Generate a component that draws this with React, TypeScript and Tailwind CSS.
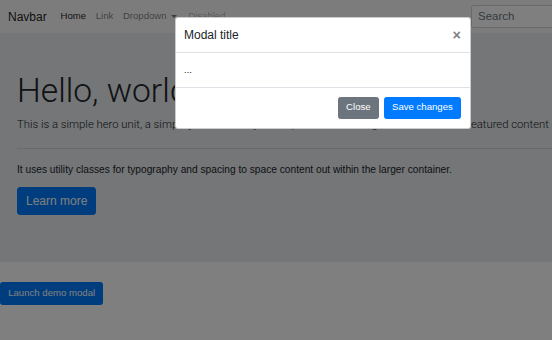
export default function App() {
  const links = [
    { label: "Home", cls: "text-black/90" },
    { label: "Link", cls: "text-black/50" },
    { label: "Dropdown", cls: "text-black/50", caret: true },
    { label: "Disabled", cls: "text-black/30" },
  ];

  return (
    <div className="relative h-[340px] w-[552px] overflow-hidden bg-white font-['Liberation_Sans',Arial,sans-serif] text-[9.6px] leading-[14.4px] text-[#212529]">
      {/* navbar */}
      <nav className="flex h-[33px] items-center bg-[#f8f9fa] pl-[8px]">
        <span className="mr-[9px] text-[12px] leading-[18px] text-black/90">Navbar</span>
        {links.map((l) => (
          <span key={l.label} className={`flex items-center px-[4.8px] ${l.cls}`}>
            {l.label}
            {l.caret && (
              <span className="ml-[4px] mr-[2px] inline-block border-x-[3px] border-t-[3px] border-x-transparent border-t-current" />
            )}
          </span>
        ))}
        <div className="ml-auto mr-[-14px] flex h-[23px] w-[95px] shrink-0 items-center rounded-[2.4px] border border-[#ced4da] bg-white px-[6px] text-[11.5px] text-[#6c757d]">
          Search
        </div>
      </nav>

      {/* jumbotron */}
      <div className="whitespace-nowrap bg-[#e9ecef] pb-[47px] pl-[17px] pt-[38px]">
        <h1 className="mb-[5px] font-['Roboto',Arial,sans-serif] text-[33.6px] font-light leading-[40px]">
          Hello, world!
        </h1>
        <p className="font-['Roboto',Arial,sans-serif] text-[11.3px] font-light leading-[18px]">
          This is a simple hero unit, a simple jumbotron-style component for calling extra attention to featured content or information.
        </p>
        <hr className="-mr-[40px] my-[14px] border-t border-black/10" />
        <p className="mb-[9.6px] text-[10.2px]">
          It uses utility classes for typography and spacing to space content out within the larger container.
        </p>
        <a className="inline-flex h-[28px] items-center rounded-[3px] border border-[#007bff] bg-[#007bff] px-[8px] text-[12px] text-white">
          Learn more
        </a>
      </div>

      <div className="mt-[20px]">
        <button className="flex h-[23px] items-center rounded-[2.4px] border border-[#007bff] bg-[#007bff] px-[7.2px] text-white">
          Launch demo modal
        </button>
      </div>

      {/* backdrop */}
      <div className="absolute inset-0 bg-black/50" />

      {/* modal */}
      <div className="absolute left-[175px] top-[17px] w-[296px] rounded-[3px] border border-black/20 bg-white">
        <div className="flex h-[35px] items-center justify-between border-b border-[#dee2e6] pl-[8px] pr-[9px]">
          <h5 className="text-[12px] leading-[18px]">Modal title</h5>
          <span className="text-[14.4px] font-bold leading-none text-black opacity-50 [text-shadow:0_1px_0_#fff]">
            ×
          </span>
        </div>
        <div className="border-b border-[#dee2e6] px-[8px] py-[9.6px]">...</div>
        <div className="flex h-[40px] items-center justify-end gap-[5px] pr-[9px]">
          <button className="flex h-[22px] items-center rounded-[2.4px] border border-[#6c757d] bg-[#6c757d] px-[7.2px] text-white">
            Close
          </button>
          <button className="flex h-[22px] items-center rounded-[2.4px] border border-[#007bff] bg-[#007bff] px-[7.2px] text-white">
            Save changes
          </button>
        </div>
      </div>
    </div>
  );
}
